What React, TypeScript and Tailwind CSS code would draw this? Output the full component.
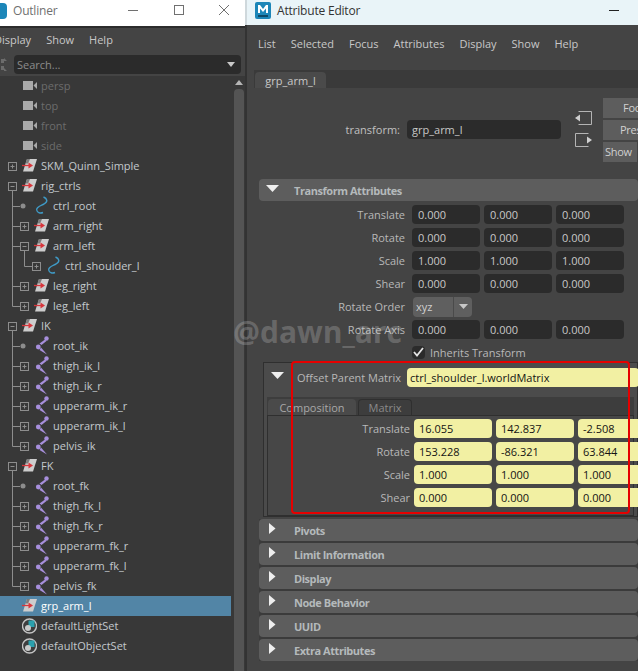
type Box = 'plus' | 'minus' | 'dot' | 'none'
type TreeRow = {
    name: string
    level: number
    box: Box
    icon: 'camera' | 'group' | 'curve' | 'joint' | 'set'
    last?: boolean
    dim?: boolean
    selected?: boolean
    outer?: boolean
}

const jointRows = (names: string[]): TreeRow[] =>
    names.map((name, i) => ({
        name,
        level: 1,
        box: i === 0 ? 'dot' : 'plus',
        icon: 'joint',
        last: i === names.length - 1,
    }))

const rows: TreeRow[] = [
    { name: 'persp', level: 0, box: 'none', icon: 'camera', dim: true },
    { name: 'top', level: 0, box: 'none', icon: 'camera', dim: true },
    { name: 'front', level: 0, box: 'none', icon: 'camera', dim: true },
    { name: 'side', level: 0, box: 'none', icon: 'camera', dim: true },
    { name: 'SKM_Quinn_Simple', level: 0, box: 'plus', icon: 'group' },
    { name: 'rig_ctrls', level: 0, box: 'minus', icon: 'group' },
    { name: 'ctrl_root', level: 1, box: 'dot', icon: 'curve' },
    { name: 'arm_right', level: 1, box: 'plus', icon: 'group' },
    { name: 'arm_left', level: 1, box: 'minus', icon: 'group' },
    { name: 'ctrl_shoulder_l', level: 2, box: 'plus', icon: 'curve', last: true, outer: true },
    { name: 'leg_right', level: 1, box: 'plus', icon: 'group' },
    { name: 'leg_left', level: 1, box: 'plus', icon: 'group', last: true },
    { name: 'IK', level: 0, box: 'minus', icon: 'group' },
    ...jointRows(['root_ik', 'thigh_ik_l', 'thigh_ik_r', 'upperarm_ik_r', 'upperarm_ik_l', 'pelvis_ik']),
    { name: 'FK', level: 0, box: 'minus', icon: 'group' },
    ...jointRows(['root_fk', 'thigh_fk_l', 'thigh_fk_r', 'upperarm_fk_r', 'upperarm_fk_l', 'pelvis_fk']),
    { name: 'grp_arm_l', level: 0, box: 'none', icon: 'group', selected: true },
    { name: 'defaultLightSet', level: 0, box: 'none', icon: 'set' },
    { name: 'defaultObjectSet', level: 0, box: 'none', icon: 'set' },
]

function Gutter({ row }: { row: TreeRow }) {
    const width = row.level === 0 ? 22 : row.level === 1 ? 34 : 46
    const cx = 12.5 + row.level * 12
    const c = '#8d8d8d'
    return (
        <svg width={width} height={20} className="shrink-0" fill="none" stroke={c}>
            {row.level >= 1 && !row.outer && <path d={`M12.5 0V${row.last ? 10.5 : 20}M12.5 10.5H20`} />}
            {row.outer && <path d="M12.5 0V20M24.5 0V10.5H32" />}
            {row.box === 'dot' && <circle cx={23} cy={10} r={2.5} fill={c} stroke="none" />}
            {(row.box === 'plus' || row.box === 'minus') && (
                <g>
                    <rect x={cx - 4} y={6.5} width={8} height={8} />
                    <path d={row.box === 'plus' ? `M${cx - 2} 10.5h4M${cx} 8.5v4` : `M${cx - 2} 10.5h4`} />
                </g>
            )}
            {row.box === 'minus' && <path d={`M${cx} 14.5V20`} />}
        </svg>
    )
}

function RowIcon({ kind }: { kind: TreeRow['icon'] }) {
    if (kind === 'camera') {
        return (
            <svg width={15} height={20} className="shrink-0">
                <rect x={1} y={5} width={10} height={9} fill="#a9a9a9" />
                <path d="M11.5 9.5L15 6v7z" fill="#a9a9a9" />
            </svg>
        )
    }
    if (kind === 'group') {
        return (
            <svg width={15} height={20} className="shrink-0">
                <path d="M5 3H15L11 15.500H1z" fill="#cdcdcd" />
                <path d="M5 3H8L6 7.500H3.500z" fill="#7b7b7b" />
                <path d="M0 9.500H7" stroke="#d8363c" strokeWidth={1.3} />
                <path d="M6.500 6.500L11 9.500L6.500 12.500z" fill="#d8363c" />
            </svg>
        )
    }
    if (kind === 'curve') {
        return (
            <svg width={15} height={20} className="shrink-0" fill="none">
                <path
                    d="M9.500 1C13 2.500 14.500 5.500 10 8C6 10 2 11 2.700 14C3.200 17 6.500 17.500 9 16.500"
                    stroke="#3f9ac6"
                    strokeWidth={1.4}
                />
            </svg>
        )
    }
    if (kind === 'joint') {
        return (
            <svg width={15} height={20} className="shrink-0" fill="#a78fdc">
                <circle cx={12.5} cy={2.5} r={2.2} />
                <path d="M11 3.500L5.500 7.500L7.500 9L12.500 5z" />
                <circle cx={4.300} cy={11} r={2.400} />
                <path d="M7 11.500L5.500 14L13 18.500z" />
            </svg>
        )
    }
    return (
        <svg width={15} height={20} className="shrink-0" fill="none">
            <circle cx={7.5} cy={10} r={7} stroke="#c4c4c4" strokeWidth={1.4} fill="#3d3d3d" />
            <rect x={6.5} y={4.5} width={6} height={6.5} fill="#2ba0ad" />
            <circle cx={6} cy={12} r={3} fill="#c9c9c9" />
        </svg>
    )
}

function OutlinerRow({ row }: { row: TreeRow }) {
    const color = row.selected ? 'text-white' : row.dim ? 'text-[#6c6c6c]' : 'text-[#c3c9cd]'
    return (
        <div className={`flex h-5 w-[231px] items-center ${row.selected ? 'bg-[#5285a6]' : ''}`}>
            <Gutter row={row} />
            <RowIcon kind={row.icon} />
            <span className={`ml-1 -translate-y-px whitespace-nowrap ${color}`}>{row.name}</span>
        </div>
    )
}

function Outliner() {
    return (
        <div className="flex h-full w-[245px] shrink-0 flex-col bg-[#444444]">
            <div className="flex h-[26px] shrink-0 items-center bg-white pb-1">
                <div className="h-4 w-[7px] rounded-r-sm bg-[#1c86b8]" />
                <span className="ml-1.5 text-xs tracking-[-0.2px] text-[#707070]">Outliner</span>
                <svg width={112} height={16} className="ml-auto mr-[5px] shrink-0" fill="none" stroke="#707070">
                    <path d="M0 7.500H10" />
                    <rect x={46.5} y={2.5} width={9} height={9} />
                    <path d="M91 2L101 12M101 2L91 12" />
                </svg>
            </div>
            <div className="h-0.5 shrink-0 bg-[#2c2c2c]" />
            <div className="flex h-[27px] shrink-0 items-center pb-[5px] text-[#c8c8c8]">
                <div className="-ml-[6px] flex gap-[15px]">
                    <span>Display</span>
                    <span>Show</span>
                    <span>Help</span>
                </div>
            </div>
            <div className="flex h-[19px] shrink-0 items-center">
                <svg width={14} height={19} className="shrink-0" fill="#6c6c6c">
                    <path d="M1 4h3v4H1zM1 11h3v4H1zM4 3l3 3H4zM4 13l3 3H4z" />
                </svg>
                <div className="flex h-[19px] w-[227px] items-center justify-between rounded-sm bg-[#2b2b2b] pl-[3px] pr-1.5 text-[#8b8b8b]">
                    <span>Search...</span>
                    <svg width={8} height={6} fill="#c8c8c8">
                        <path d="M0 0H8L4 5z" />
                    </svg>
                </div>
            </div>
            <div className="mt-0.5 flex min-h-0 flex-1 bg-[#383838]">
                <div className="flex-1 overflow-hidden">
                    {rows.map(row => (
                        <OutlinerRow key={row.name} row={row} />
                    ))}
                </div>
                <div className="flex w-3 shrink-0 flex-col items-center">
                    <svg width={10} height={13} className="shrink-0" fill="#b5b5b5">
                        <path d="M1 9H9L5 4z" />
                    </svg>
                    <div className="w-2.5 flex-1 rounded-t bg-[#545454]" />
                </div>
            </div>
        </div>
    )
}

function Field({
    value,
    w = 'w-[68px]',
    pad = 'pl-[5px]',
    yellow,
}: {
    value: string
    w?: string
    pad?: string
    yellow?: boolean
}) {
    const tone = yellow ? 'bg-[#f2f0a3] text-[#141414]' : 'bg-[#2b2b2b] text-[#c8c8c8]'
    return <div className={`flex h-[19px] shrink-0 items-center rounded-sm ${pad} ${w} ${tone}`}>{value}</div>
}

function Triangle({ open }: { open?: boolean }) {
    return open ? (
        <svg width={13} height={7} className="shrink-0" fill="#eeeeee">
            <path d="M0 0H13L6.5 7z" />
        </svg>
    ) : (
        <svg width={7} height={11} className="shrink-0" fill="#eeeeee">
            <path d="M0 0L6.5 5.5L0 11z" />
        </svg>
    )
}

function VecRow({ label, values }: { label: string; values: string[] }) {
    return (
        <div className="flex h-[19px] items-center gap-1">
            <span className="w-[149px] shrink-0 pr-[3px] text-right text-[#b8b8b8]">{label}</span>
            {values.map((v, i) => (
                <Field key={i} value={v} pad="pl-1.5" />
            ))}
        </div>
    )
}

function MatrixRow({ label, values }: { label: string; values: string[] }) {
    return (
        <div className="flex h-[19px] items-center gap-1">
            <span className="w-[142px] shrink-0 text-right text-[#b8b8b8]">{label}</span>
            {values.map((v, i) => (
                <Field key={i} value={v} w="w-[78px]" yellow />
            ))}
        </div>
    )
}

function SectionHeader({ title, open }: { title: string; open?: boolean }) {
    return (
        <div className="flex h-[22px] w-[379px] shrink-0 items-center rounded-sm bg-[#5d5d5d]">
            <div className="flex w-[35px] shrink-0 -translate-y-0.5 justify-center pr-2">
                <Triangle open={open} />
            </div>
            <span className="font-bold tracking-[-0.45px] text-[#b4b9bb]">{title}</span>
        </div>
    )
}

function AttributeEditor() {
    return (
        <div className="flex h-full min-w-0 flex-1 flex-col overflow-hidden bg-[#444444]">
            <div className="flex h-[25px] shrink-0 items-center bg-[#e9f4f8] pb-1">
                <svg width={16} height={17} className="ml-2 shrink-0">
                    <rect width={16} height={17} rx={2} fill="#1c86b8" />
                    <path d="M3 11V3h2l3 4 3-4h2v8h-2V6.500L8 10 5 6.500V11z" fill="#ffffff" />
                    <rect x={3} y={13} width={10} height={2} fill="#0d4a68" />
                </svg>
                <span className="ml-1.5 text-xs tracking-[-0.2px] text-[#333333]">Attribute Editor</span>
                <div className="ml-auto mr-[19px] h-px w-2.5 shrink-0 bg-[#222222]" />
            </div>
            <div className="flex h-9 shrink-0 items-center gap-[15px] pl-[11px] text-[#c8c8c8]">
                <span>List</span>
                <span>Selected</span>
                <span>Focus</span>
                <span>Attributes</span>
                <span>Display</span>
                <span>Show</span>
                <span>Help</span>
            </div>
            <div className="ml-[7px] mt-[9px] flex h-[18px] shrink-0 items-end bg-[#3a3a3a]">
                <div className="ml-px flex h-4 w-[71px] items-center justify-center rounded-t-sm bg-[#4a4a4a] text-[#c8c8c8]">
                    grp_arm_l
                </div>
            </div>

            {/* node name and buttons */}
            <div className="ml-[100px] mt-2.5 flex h-[72px] shrink-0 items-start">
                <span className="mt-[22px] flex h-[19px] w-[60px] shrink-0 items-center justify-end pr-[7px] text-[#c0c0c0]">
                    transform:
                </span>
                <div className="mt-[22px]">
                    <Field value="grp_arm_l" w="w-[154px]" />
                </div>
                <svg width={17} height={36} className="ml-3.5 mt-[13px] shrink-0" fill="none" stroke="#b4b4b4">
                    <path d="M3.500 0.500H16.500V13.500H3.500" />
                    <path d="M0 7L5 3.500v7z" fill="#d0d0d0" stroke="none" />
                    <path d="M13.500 22.500H0.500V35.500H13.500" />
                    <path d="M17 29L12 25.500v7z" fill="#d0d0d0" stroke="none" />
                </svg>
                <div className="ml-[11px] flex shrink-0 flex-col gap-0.5 tracking-[-0.3px] text-[#d0d0d0]">
                    <div className="h-5 w-[60px] bg-[#5d5d5d] pl-5 leading-5">Focus</div>
                    <div className="h-5 w-[60px] bg-[#5d5d5d] pl-[17px] leading-5">Presets</div>
                    <div className="h-5 w-[34px] bg-[#5d5d5d] pl-0.5 leading-5">Show</div>
                </div>
            </div>

            {/* transform attributes */}
            <div className="ml-3 mt-[9px] flex flex-col">
                <SectionHeader title="Transform Attributes" open />
                <div className="flex flex-col gap-1 pt-1">
                    <VecRow label="Translate" values={['0.000', '0.000', '0.000']} />
                    <VecRow label="Rotate" values={['0.000', '0.000', '0.000']} />
                    <VecRow label="Scale" values={['1.000', '1.000', '1.000']} />
                    <VecRow label="Shear" values={['0.000', '0.000', '0.000']} />
                    <div className="flex h-[19px] items-center">
                        <span className="w-[149px] shrink-0 pr-[3px] text-right text-[#b8b8b8]">Rotate Order</span>
                        <div className="ml-[5px] flex h-5 w-[59px] items-center rounded-sm bg-[#5f5f5f] text-[#d0d0d0]">
                            <span className="w-10 pl-[3px]">xyz</span>
                            <div className="flex h-5 flex-1 items-center justify-center border-l border-[#4a4a4a]">
                                <svg width={9} height={5} fill="#c8c8c8">
                                    <path d="M0 0H9L4.500 5z" />
                                </svg>
                            </div>
                        </div>
                    </div>
                    <VecRow label="Rotate Axis" values={['0.000', '0.000', '0.000']} />
                </div>
                <div className="ml-[153px] mt-1.5 flex h-3.5 items-center gap-[5px] text-[#b8b8b8]">
                    <div className="flex h-[13px] w-[13px] items-center justify-center rounded-sm bg-[#2b2b2b]">
                        <svg width={11} height={10} fill="none" stroke="#e4e4e4" strokeWidth={1.8}>
                            <path d="M1 5L4 8.500L10 1" />
                        </svg>
                    </div>
                    <span>Inherits Transform</span>
                </div>
            </div>

            {/* offset parent matrix */}
            <div className="ml-4 mt-[3px] flex h-[155px] w-[375px] shrink-0 flex-col border border-[#2f2f2f] bg-[#4b4b4b]">
                <div className="mb-1.5 flex h-7 shrink-0 items-center">
                    <div className="ml-[7px] -translate-y-0.5">
                        <Triangle open />
                    </div>
                    <span className="ml-[13px] w-[110px] shrink-0 whitespace-nowrap text-[#b8b8b8]">
                        Offset Parent Matrix
                    </span>
                    <Field value="ctrl_shoulder_l.worldMatrix" w="w-[232px]" pad="pl-[3px]" yellow />
                </div>
                <div className="mx-[3px] flex h-[18px] shrink-0 items-end bg-[#3d3d3d]">
                    <div className="ml-px flex h-4 w-[88px] items-center justify-center rounded-t-sm bg-[#4a4a4a] text-[#a8a8a8]">
                        Composition
                    </div>
                    <div className="ml-0.5 flex h-4 w-[54px] items-center justify-center rounded-t-sm border border-b-0 border-[#2f2f2f] text-[#8a8a8a]">
                        Matrix
                    </div>
                </div>
                <div className="mx-[3px] flex flex-1 flex-col gap-1 border border-[#2f2f2f] bg-[#474747] pt-[3px]">
                    <MatrixRow label="Translate" values={['16.055', '142.837', '-2.508']} />
                    <MatrixRow label="Rotate" values={['153.228', '-86.321', '63.844']} />
                    <MatrixRow label="Scale" values={['1.000', '1.000', '1.000']} />
                    <MatrixRow label="Shear" values={['0.000', '0.000', '0.000']} />
                </div>
            </div>

            {/* collapsed sections */}
            <div className="ml-3 mt-0.5 flex flex-col gap-0.5 bg-[#3b3b3b]">
                {['Pivots', 'Limit Information', 'Display', 'Node Behavior', 'UUID', 'Extra Attributes'].map(t => (
                    <SectionHeader key={t} title={t} />
                ))}
            </div>
        </div>
    )
}

export default function App() {
    return (
        <div
            className="relative flex h-[671px] w-[638px] overflow-hidden bg-[#555555] text-[11px] leading-none"
            style={{ fontFamily: '"Open Sans", "Noto Sans", sans-serif' }}
        >
            <Outliner />
            <div className="flex w-0.5 shrink-0 flex-col bg-[#333333]">
                <div className="h-[25px] bg-[#cfd8dc]" />
            </div>
            <AttributeEditor />

            {/* red annotation box */}
            <div className="pointer-events-none absolute left-[291px] top-[361px] h-[153px] w-[339px] rounded border-2 border-[#e60000]" />

            {/* watermark */}
            <div className="pointer-events-none absolute left-[233px] top-[312px] whitespace-nowrap text-[30px] font-bold leading-10 text-white/20">
                @dawn_arc
            </div>
        </div>
    )
}
